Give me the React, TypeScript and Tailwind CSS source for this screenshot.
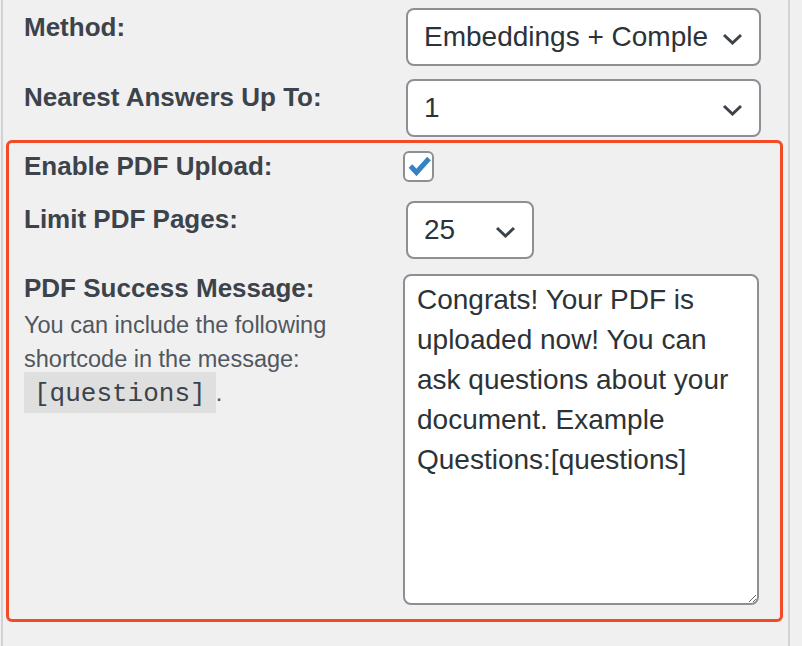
import React from "react";

const Chevron: React.FC = () => (
  <svg width="21" height="12" viewBox="0 0 21 12" className="shrink-0">
    <path d="M2 2l8.5 8 8.5-8" fill="none" stroke="#3c434a" strokeWidth="3" />
  </svg>
);

const Label: React.FC<{ children: React.ReactNode; className?: string }> = ({
  children,
  className = "",
}) => (
  <div className={`text-[26px] font-bold leading-[32px] text-[#3c434a] ${className}`}>
    {children}
  </div>
);

const FakeSelect: React.FC<{ value: string; className: string }> = ({ value, className }) => (
  <div
    className={`ml-[3px] flex h-[58px] items-center rounded-[8px] border-2 border-[#8c8f94] bg-white pl-[16px] pr-[16px] text-[28px] text-[#2c3338] ${className}`}
  >
    <span className="w-[284px] overflow-hidden whitespace-nowrap">{value}</span>
    <span className="ml-auto mt-[3px]">
      <Chevron />
    </span>
  </div>
);

const App: React.FC = () => {
  return (
    <div className="h-[646px] w-[802px] bg-[#f0f0f1] font-['Liberation_Sans',Arial,sans-serif]">
      <div className="ml-px h-full w-[789px] border-x-2 border-[#d2d2d4]">
        {/* Rows above the highlighted block */}
        <div className="ml-[3px] mr-[5px] border-x-[3px] border-transparent">
          <div className="flex items-start">
            <div className="w-[394px] shrink-0 pl-[15px]">
              <Label className="mt-[11px]">Method:</Label>
            </div>
            <div className="mt-[8px]">
              <FakeSelect value="Embeddings + Completion" className="w-[355px]" />
            </div>
          </div>
          <div className="mt-[13px] flex items-start">
            <div className="w-[394px] shrink-0 pl-[15px]">
              <Label className="mt-[2px]">Nearest Answers Up To:</Label>
            </div>
            <FakeSelect value="1" className="w-[355px]" />
          </div>
        </div>

        {/* Highlighted PDF settings */}
        <div className="ml-[3px] mr-[5px] mt-[3px] rounded-[6px] border-[3px] border-[#f24b26] pb-[14px] pt-[7px]">
          <div className="flex items-start">
            <div className="w-[394px] shrink-0 pl-[15px]">
              <Label>Enable PDF Upload:</Label>
            </div>
            <div className="mt-[1px] h-[31px] w-[31px] rounded-[6px] border-2 border-[#8c8f94] bg-white">
              <svg width="27" height="27" viewBox="0 0 27 27">
                <path
                  d="M5.5 13l6 6.5 12.5-14"
                  fill="none"
                  stroke="#3582c4"
                  strokeWidth="5"
                />
              </svg>
            </div>
          </div>

          <div className="mt-[19px] flex items-start">
            <div className="w-[394px] shrink-0 pl-[15px]">
              <Label className="mt-[2px]">Limit PDF Pages:</Label>
            </div>
            <FakeSelect value="25" className="w-[128px]" />
          </div>

          <div className="mt-[13px] flex items-start">
            <div className="w-[394px] shrink-0 pl-[15px]">
              <Label>PDF Success Message:</Label>
              <p className="mt-[4px] text-[23.5px] leading-[34px] text-[#50575e]">
                You can include the following shortcode in the message:{" "}
                <code className="bg-[#dfdfe0] px-[10px] pb-[4px] pt-[7px] font-['Liberation_Mono',monospace] text-[26px] text-[#3c434a]">
                  [questions]
                </code>
                .
              </p>
            </div>
            <textarea
              className="mt-[2px] h-[331px] w-[356px] rounded-[8px] border-2 border-[#8c8f94] bg-white pb-[4px] pl-[12px] pr-[20px] pt-[4px] text-[28px] leading-[40px] text-[#2c3338] outline-none"
              defaultValue="Congrats! Your PDF is uploaded now! You can ask questions about your document. Example Questions:[questions]"
            />
          </div>
        </div>
      </div>
    </div>
  );
};

export default App;
